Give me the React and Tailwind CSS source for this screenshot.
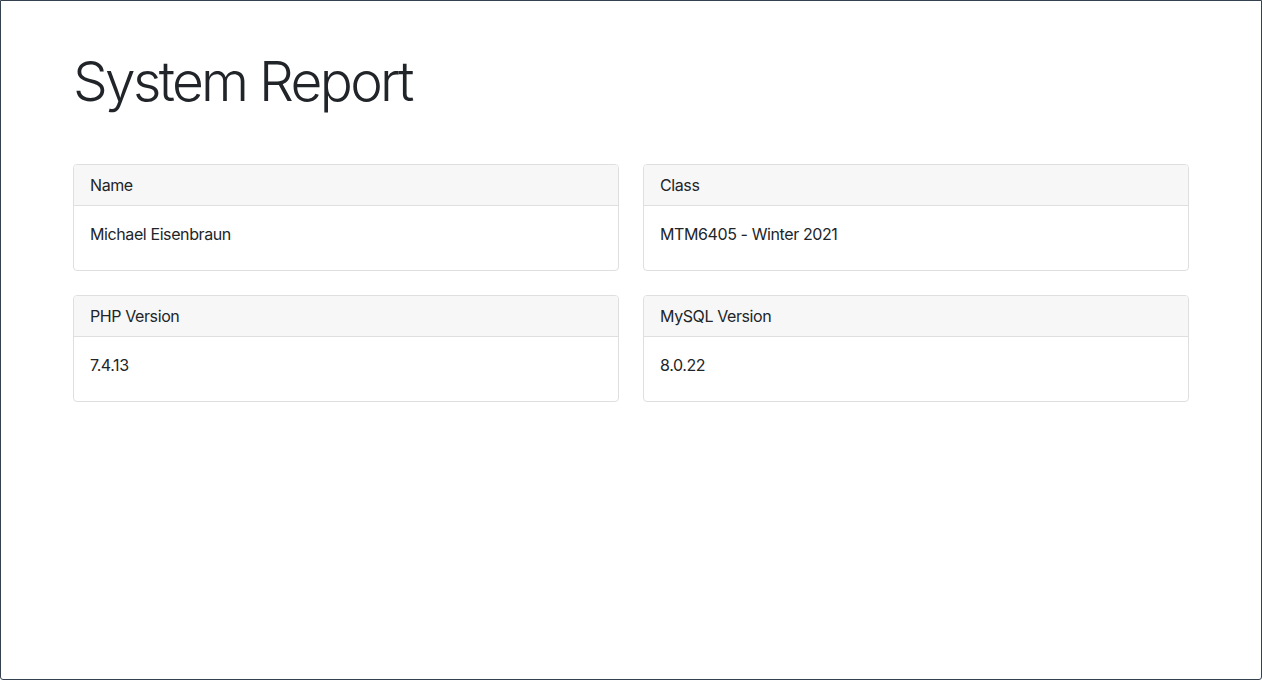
import React from 'react'

const items = [
  { label: "Name", value: "Michael Eisenbraun" },
  { label: "Class", value: "MTM6405 - Winter 2021" },
  { label: "PHP Version", value: "7.4.13" },
  { label: "MySQL Version", value: "8.0.22" }
];

function App() {
  return (
    <div
      className="h-[680px] w-full bg-white border border-[#34424f] rounded-b-[3px] text-[#212529]"
      style={{ fontFamily: 'Inter, "Liberation Sans", sans-serif' }}
    >
      <div className="w-[1116px] mx-auto pt-[47px]">
        <h1 className="text-[55px] leading-[1.2] font-light tracking-[-2.7px] mb-[50px]">
          System Report
        </h1>

        {/* info cards */}
        <div className="grid grid-cols-2 gap-x-6 gap-y-6">
          {items.map((item, index) => (
            <div key={index} className="border border-[#dfdfdf] rounded-[4px] overflow-hidden">
              <div className="bg-[#f7f7f7] border-b border-[#dfdfdf] px-4 py-2 text-base leading-6 tracking-[-0.4px]">
                {item.label}
              </div>
              <div className="px-4 pt-4 pb-6 text-base leading-6 tracking-[-0.4px]">
                {item.value}
              </div>
            </div>
          ))}
        </div>
      </div>
    </div>
  )
}

export default App
